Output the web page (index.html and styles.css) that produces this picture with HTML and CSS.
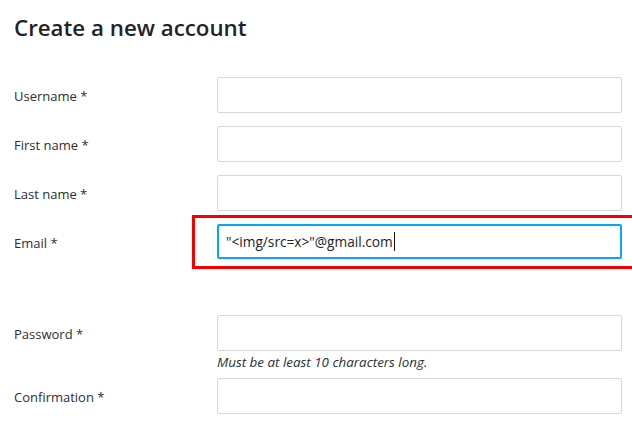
FILE: index.html
```html
<!DOCTYPE html>
<html lang="en">
<head>
    <meta charset="UTF-8">
    <meta name="viewport" content="width=device-width, initial-scale=1.0">
    <title>Create a new account</title>
    <link rel="stylesheet" href="styles.css">
</head>
<body>
    <h1 class="page-title">Create a new account</h1>

    <!-- 注册表单 -->
    <form class="signup-form">
        <div class="form-row">
            <label class="form-label" for="username">Username *</label>
            <div class="form-field">
                <input class="form-input" id="username" type="text">
            </div>
        </div>
        <div class="form-row">
            <label class="form-label" for="first-name">First name *</label>
            <div class="form-field">
                <input class="form-input" id="first-name" type="text">
            </div>
        </div>
        <div class="form-row">
            <label class="form-label" for="last-name">Last name *</label>
            <div class="form-field">
                <input class="form-input" id="last-name" type="text">
            </div>
        </div>
        <div class="form-row form-row-email">
            <label class="form-label" for="email">Email *</label>
            <div class="form-field">
                <div class="form-input form-input-focus" id="email">"&lt;img/src=x&gt;"@gmail.com<span class="caret"></span></div>
            </div>
            <!-- 标注红框 -->
            <div class="highlight-box"></div>
        </div>
        <div class="form-row form-row-hint">
            <label class="form-label" for="password">Password *</label>
            <div class="form-field">
                <input class="form-input" id="password" type="password">
                <div class="form-hint">Must be at least 10 characters long.</div>
            </div>
        </div>
        <div class="form-row">
            <label class="form-label" for="confirmation">Confirmation *</label>
            <div class="form-field">
                <input class="form-input" id="confirmation" type="password">
            </div>
        </div>
    </form>
</body>
</html>
```

FILE: styles.css
```css
/* 基础样式 */
body {
    margin: 0;
    padding: 0 10px 0 14px;
    background: #fff;
    color: #212529;
    font-family: "Open Sans", "Noto Sans", sans-serif;
    overflow: hidden;
}

.page-title {
    margin: 11px 0 0;
    font-size: 22.3px;
    font-weight: 600;
    line-height: 34px;
    color: #1f2329;
}

/* 表单 */
.signup-form {
    margin-top: 32px;
}

.form-row {
    position: relative;
    display: flex;
    align-items: flex-start;
    margin-bottom: 13px;
}

.form-row-email {
    margin-bottom: 56px;
}

.form-row-hint {
    margin-bottom: 8px;
}

.form-label {
    width: 203px;
    flex-shrink: 0;
    padding-top: 10px;
    font-size: 13px;
    line-height: 18px;
    color: #2b2f33;
}

.form-field {
    width: 406px;
}

.form-input {
    display: block;
    box-sizing: border-box;
    width: 100%;
    height: 36px;
    margin: 0;
    padding: 0 8px;
    border: 1px solid #d3d9e0;
    border-radius: 2px;
    background: #fff;
    font-family: inherit;
    font-size: 13px;
    color: #222;
}

.form-input-focus {
    display: flex;
    align-items: center;
    height: 35px;
    border: 2px solid #0aa5f5;
    padding-left: 7px;
    font-size: 13.7px;
    white-space: nowrap;
}

.caret {
    display: inline-block;
    width: 1px;
    height: 19px;
    margin-left: 1px;
    background: #111;
}

.form-hint {
    margin-top: 3px;
    font-size: 13.4px;
    font-style: italic;
    line-height: 16px;
    color: #2b2f33;
}

/* 标注红框 */
.highlight-box {
    position: absolute;
    left: 178px;
    top: -9px;
    right: -20px;
    height: 48px;
    border: 3px solid #f50000;
    pointer-events: none;
}
```
